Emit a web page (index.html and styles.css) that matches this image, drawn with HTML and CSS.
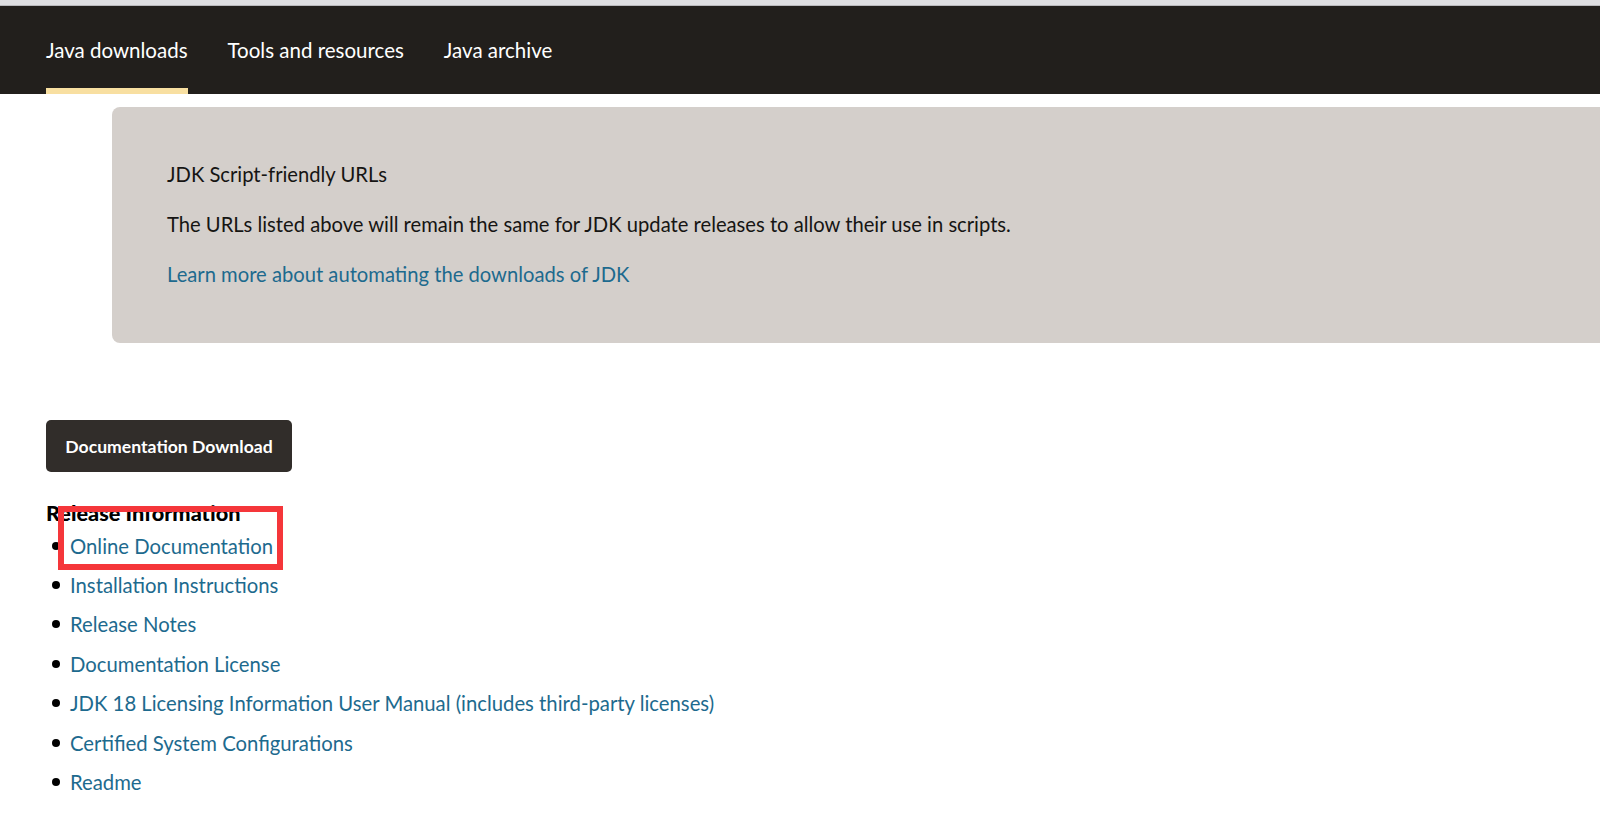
FILE: index.html
```html
<!DOCTYPE html>
<html lang="en">
<head>
<meta charset="utf-8">
<title>Java Downloads</title>
<link rel="stylesheet" href="styles.css">
</head>
<body>
<div class="topstrip"></div>
<nav class="nav">
  <a class="nav-item active" href="#">Java downloads</a>
  <a class="nav-item" href="#">Tools and resources</a>
  <a class="nav-item" href="#">Java archive</a>
</nav>
<main class="main">
  <section class="notice">
    <p class="notice-title">JDK Script-friendly URLs</p>
    <p class="notice-text">The URLs listed above will remain the same for JDK update releases to allow their use in scripts.</p>
    <p class="notice-link"><a href="#">Learn more about automating the downloads of JDK</a></p>
  </section>
  <div class="content">
    <a class="btn" href="#">Documentation Download</a>
    <div class="release">
      <h4 class="release-title">Release Information</h4>
      <ul class="release-list">
        <li><a href="#">Online Documentation</a></li>
        <li><a href="#">Installation Instructions</a></li>
        <li><a href="#">Release Notes</a></li>
        <li><a href="#">Documentation License</a></li>
        <li><a href="#">JDK 18 Licensing Information User Manual (includes third-party licenses)</a></li>
        <li><a href="#">Certified System Configurations</a></li>
        <li><a href="#">Readme</a></li>
      </ul>
      <div class="highlight"></div>
    </div>
  </div>
</main>
</body>
</html>
```

FILE: styles.css
```css
* { box-sizing: border-box; }
html, body { margin: 0; padding: 0; }
body {
  font-family: Lato, "Open Sans", sans-serif;
  color: #161513;
  background: #fff;
  overflow: hidden;
}
a { text-decoration: none; }

.topstrip {
  height: 6px;
  background: #dedee1;
  border-bottom: 1px solid #b9b9bc;
}

.nav {
  height: 88px;
  background: #221f1c;
  display: flex;
  gap: 40px;
  padding-left: 46px;
}
.nav-item {
  display: flex;
  align-items: center;
  color: #fff;
  font-size: 20.5px;
  border-top: 6px solid transparent;
  border-bottom: 6px solid transparent;
  padding-bottom: 1px;
}
.nav-item.active { border-bottom-color: #f8dfa1; }

.main { padding-top: 13px; }

.notice {
  margin-left: 112px;
  height: 236px;
  background: #d4cfcb;
  border-radius: 8px 0 0 8px;
  padding: 52px 0 0 55px;
  font-size: 20.2px;
}
.notice p { margin: 0 0 20px; line-height: 30px; }
.notice-link a { color: #1d6a8e; }

.content {
  padding: 77px 0 0 46px;
}
.btn {
  display: inline-flex;
  align-items: center;
  justify-content: center;
  width: 246px;
  height: 52px;
  background: #312d2a;
  color: #fff;
  border-radius: 5px;
  font-weight: 700;
  font-size: 17.6px;
}

.release { position: relative; margin-top: 27px; }
.release-title {
  margin: 0;
  font-size: 21.7px;
  font-weight: 900;
  line-height: 28px;
  color: #000;
}
.release-list {
  list-style: none;
  margin: 0;
  padding: 0;
}
.release-list li {
  display: flex;
  align-items: center;
  gap: 10px;
  height: 39.5px;
  font-size: 20.3px;
}
.release-list li:first-child { height: 38px; }
.release-list li::before {
  content: "";
  width: 8px;
  height: 8px;
  border-radius: 50%;
  background: #000;
  margin-left: 6px;
}
.release-list a { color: #1d6a8e; }

.highlight {
  position: absolute;
  left: 12px;
  top: 7px;
  width: 225px;
  height: 64px;
  border: 6px solid #f5363a;
}
```
